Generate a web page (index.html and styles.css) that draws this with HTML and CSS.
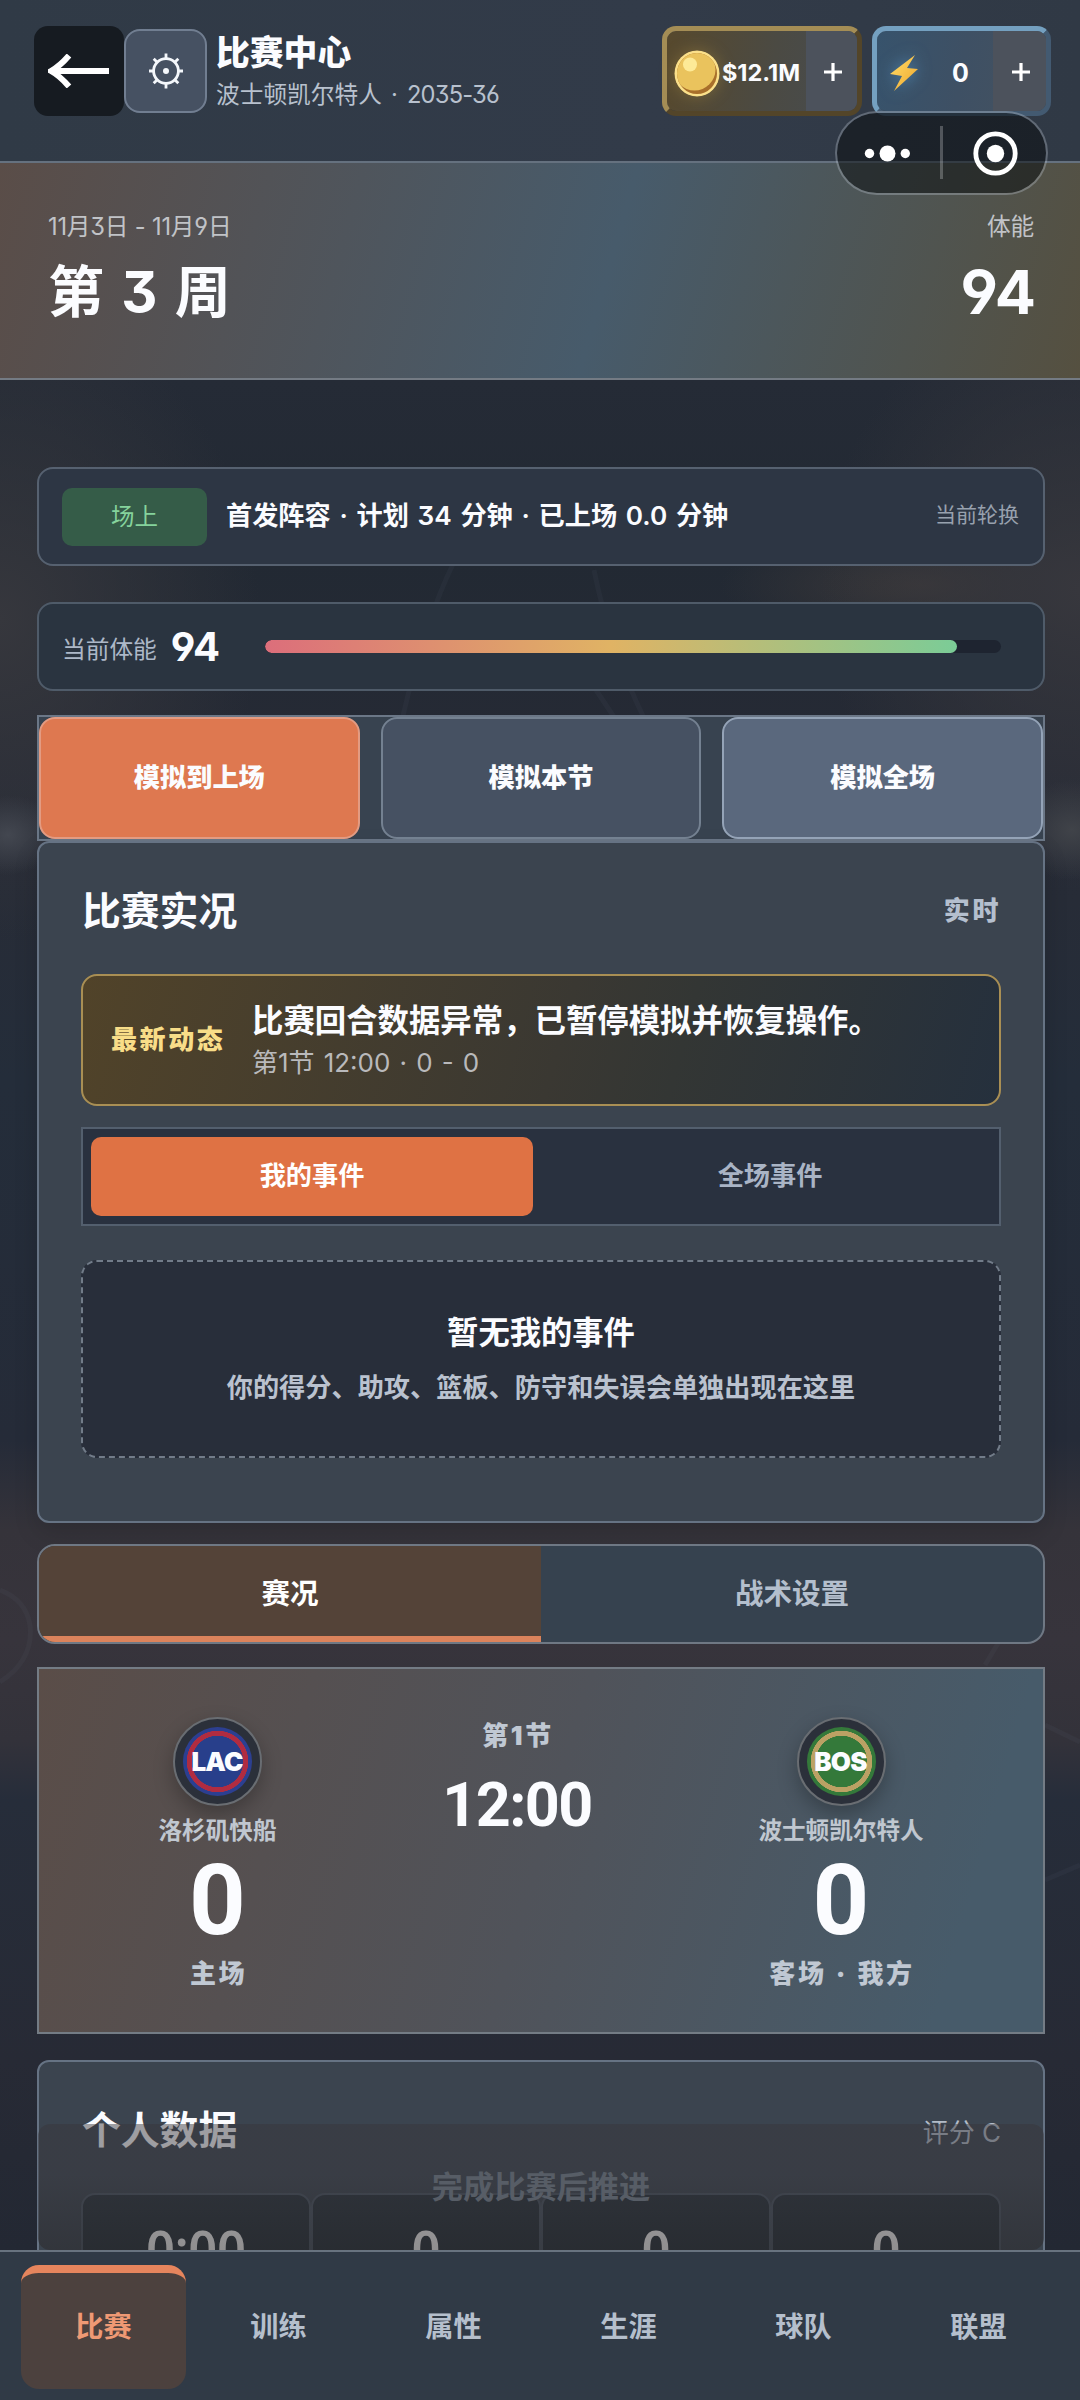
FILE: index.html
```html
<!DOCTYPE html>
<html lang="zh-CN">
<head>
<meta charset="utf-8">
<title>比赛中心</title>
<link rel="stylesheet" href="styles.css">
</head>
<body>
<div class="app">
  <svg class="court" width="1080" height="2400" viewBox="0 0 1080 2400" fill="none" aria-hidden="true">
    <path d="M455 560Q425 620 402 720M594 570Q610 650 646 722M596 690L616 720"/>
    <path d="M0 1682Q34 1660 30 1625Q26 1600 0 1590M1045 1725L1080 1742M985 1665L1000 1640M1045 1880L1080 1865"/>
  </svg>

  <header class="header">
    <button class="back" aria-label="返回">
      <svg width="62" height="34" viewBox="0 0 62 34" fill="none"><path d="M61 17H3M21 1.5Q12 12 3 17Q12 22 21 32.5" stroke="#fff" stroke-width="6"/></svg>
    </button>
    <button class="gear" aria-label="设置">
      <svg width="34" height="36" viewBox="-17 -18 34 36" fill="none" stroke="#f4f7fb" stroke-width="2.8">
        <circle r="12.4"/><circle r="3" fill="#f4f7fb" stroke="none"/>
        <path d="M0-12V-17.5M0 12V17.5M-12 0H-17M12 0H17M-8.5-8.5L-12.3-12.3M8.5-8.5L12.3-12.3M-8.5 8.5L-12.3 12.3M8.5 8.5L12.3 12.3"/>
      </svg>
    </button>
    <div class="heading">
      <h1>比赛中心</h1>
      <p>波士顿凯尔特人 · <span class="season">2035-36</span></p>
    </div>
    <div class="chip gold">
      <svg class="coin" width="46" height="47" viewBox="0 0 46 47">
        <defs><clipPath id="disc"><ellipse cx="23" cy="23.500" rx="20" ry="20.500"/></clipPath></defs>
        <ellipse cx="23" cy="23.500" rx="22.500" ry="23" fill="#fbe08a"/>
        <g clip-path="url(#disc)"><rect width="46" height="47" fill="#a86f2b"/><circle cx="20.500" cy="19.500" r="21" fill="#eac35d"/></g>
        <circle cx="16" cy="14.500" r="7" fill="#fdea97"/>
      </svg>
      <b>$12.1M</b>
      <span class="plus"><svg width="18" height="18" viewBox="0 0 18 18"><path d="M9 0V18M0 9H18" stroke="#fff" stroke-width="3.200"/></svg></span>
    </div>
    <div class="chip blue">
      <svg class="bolt" width="28" height="38" viewBox="0 0 28 38"><defs><linearGradient id="bolt" x1="0" y1="0" x2="1" y2="1"><stop stop-color="#ffdf6b"/><stop offset="1" stop-color="#efa52b"/></linearGradient></defs><path d="M25 1L0 20L12 22L4 37L28 15L17 14Z" fill="url(#bolt)"/></svg>
      <b>0</b>
      <span class="plus"><svg width="18" height="18" viewBox="0 0 18 18"><path d="M9 0V18M0 9H18" stroke="#fff" stroke-width="3.200"/></svg></span>
    </div>
  </header>

  <section class="week">
    <div><p>11月3日 - 11月9日</p><h2>第 3 周</h2></div>
    <div class="right"><p>体能</p><h2>94</h2></div>
  </section>

  <main class="content">
    <section class="status">
      <span class="tag">场上</span>
      <strong>首发阵容 · 计划 34 分钟 · 已上场 0.0 分钟</strong>
      <small>当前轮换</small>
    </section>
    <section class="energy">
      <span>当前体能</span><b>94</b>
      <div class="track"><div class="fill" style="width:94%"></div></div>
    </section>
    <div class="actions">
      <button class="act primary">模拟到上场</button>
      <button class="act">模拟本节</button>
      <button class="act light">模拟全场</button>
    </div>

    <section class="panel live">
      <div class="panel-head"><h3>比赛实况</h3><span class="badge">实时</span></div>
      <div class="notice">
        <span class="label">最新动态</span>
        <div><p class="msg">比赛回合数据异常，已暂停模拟并恢复操作。</p><p class="time">第1节 12:00 · 0 - 0</p></div>
      </div>
      <div class="seg"><button class="on">我的事件</button><button>全场事件</button></div>
      <div class="empty"><strong>暂无我的事件</strong><p>你的得分、助攻、篮板、防守和失误会单独出现在这里</p></div>
    </section>

    <div class="tabs"><button class="on">赛况</button><button>战术设置</button></div>

    <section class="score">
      <div class="team">
        <div class="logo"><div class="lac">LAC</div></div>
        <span class="name">洛杉矶快船</span><span class="pts">0</span><span class="side">主场</span>
      </div>
      <div class="clock"><span class="side">第1节</span><b>12:00</b></div>
      <div class="team">
        <div class="logo"><div class="bos">BOS</div></div>
        <span class="name">波士顿凯尔特人</span><span class="pts">0</span><span class="side">客场 · 我方</span>
      </div>
    </section>

    <section class="panel stats">
      <div class="panel-head"><h3>个人数据</h3><span class="grade">评分 C</span></div>
      <div class="cells"><div>0:00</div><div>0</div><div>0</div><div>0</div></div>
    </section>
  </main>

  <div class="advance">完成比赛后推进</div>

  <nav class="nav">
    <a class="on">比赛</a><a>训练</a><a>属性</a><a>生涯</a><a>球队</a><a>联盟</a>
  </nav>

  <div class="capsule">
    <svg width="209" height="80" viewBox="0 0 209 80" fill="#fff">
      <circle cx="32.500" cy="40.500" r="4.700"/><circle cx="50.500" cy="40.500" r="8"/><circle cx="68.300" cy="40.500" r="4.700"/>
      <rect x="103" y="13" width="3" height="53" fill="#fff" fill-opacity=".24"/>
      <circle cx="158.500" cy="40.500" r="19.700" fill="none" stroke="#fff" stroke-width="4.800"/><circle cx="158.500" cy="40.500" r="8.700"/>
    </svg>
  </div>
</div>
</body>
</html>
```
FILE: styles.css
```css
* { box-sizing: border-box; margin: 0; padding: 0; }
body { width: 1080px; height: 2400px; overflow: hidden; }
button { border: 0; background: none; font: inherit; color: inherit; }
svg { display: block; }

.app {
  position: relative;
  width: 1080px;
  height: 2400px;
  overflow: hidden;
  color: #fbfcff;
  font-family: Inter, "Noto Sans CJK SC", sans-serif;
  font-feature-settings: "cv03", "cv04", "cv09";
  background:
    radial-gradient(ellipse 50px 40px at 8px 835px, #434750, transparent),
    radial-gradient(ellipse 60px 50px at 1072px 830px, #404349, transparent),
    radial-gradient(ellipse 260px 320px at 0 620px, #36373d, transparent),
    radial-gradient(ellipse 260px 300px at 1080px 590px, #37373d, transparent),
    radial-gradient(ellipse 200px 60px at 920px 585px, #393739, transparent),
    linear-gradient(#252b36 380px, #222933 560px, #262a35 760px, #272c37 900px, #242d3a 1080px, #252b38 1440px, #35333a 1530px, #37343c 1640px, #33323a 1740px, #262d3a 1800px, #272a35 2060px, #232833 2250px);
}
.court { position: absolute; inset: 0; stroke: #8fa0b8; stroke-opacity: .05; stroke-width: 5; }

.header {
  position: relative;
  display: flex;
  align-items: flex-start;
  height: 163px;
  padding: 26px 29px 0 34px;
  background: linear-gradient(90deg, #303a46, #323b49 60%, #303945);
  border-bottom: 2px solid #65717f;
}
.back { display: flex; align-items: center; justify-content: center; width: 90px; height: 90px; border-radius: 14px; background: #161b21; }
.back svg { margin-left: -1px; }
.gear { display: flex; align-items: center; justify-content: center; width: 83px; height: 84px; margin-top: 3px; border: 2px solid #717e91; border-radius: 16px; background: #465162; }
.heading { margin: 6px 0 0 9px; width: 446px; }
.heading h1 { font-size: 33.800px; line-height: 41px; font-weight: 800; }
.heading p { font-size: 23.700px; line-height: 44px; color: #b8c1ce; white-space: nowrap; word-spacing: 2.500px; }
.season { letter-spacing: -.8px; }
.chip { display: flex; align-items: center; height: 90px; border: 5px solid; border-radius: 14px; }
.chip b { font-weight: 700; text-align: center; padding-top: 3px; }
.gold { width: 200px; margin-right: 10px; border-color: #a48d55 #534529 #534529 #a48d55; background: linear-gradient(100deg, #57492d, #4b4a43 55%, #474c50) padding-box; }
.gold b { width: 80px; margin-left: 1px; font-size: 23.500px; letter-spacing: 0; }
.gold .plus { width: 51px; }
.coin { margin: 4px 0 0 7px; border-radius: 50%; filter: drop-shadow(0 0 8px #c9a34655); }
.blue { width: 179px; border-color: #74a0c0 #435a71 #435a71 #74a0c0; background: linear-gradient(100deg, #37536c, #3e5064 50%, #45525f) padding-box; }
.blue b { width: 55px; margin-left: 15px; font-size: 25px; }
.blue .plus { width: 53px; }
.bolt { margin: 4px 0 0 13px; filter: drop-shadow(0 0 8px #5fa9dd99); }
.plus { display: flex; align-items: center; justify-content: center; height: 80px; margin-left: auto; padding-top: 2px; padding-left: 2px; border-radius: 0 9px 9px 0; background: #4c525c; }

.week {
  display: flex;
  justify-content: space-between;
  height: 217px;
  padding: 45px 46px 0 48px;
  border-bottom: 2px solid #747b84;
  background: linear-gradient(106deg, #5a4d48, #475b6b 56%, #555040);
}
.week p { font-size: 23.700px; line-height: 38px; color: #c1c3c7; letter-spacing: -.2px; }
.week h2 { margin-top: 10px; font-size: 56px; line-height: 72px; font-weight: 700; white-space: nowrap; word-spacing: 4px; }
.week .right { text-align: right; }
.week .right h2 { font-size: 61px; letter-spacing: -1px; margin-right: -1px; }

.content { position: relative; padding: 87px 35px 0 37px; }
.status { display: flex; align-items: center; height: 99px; padding: 0 24px 0 23px; border: 2px solid #566170; border-radius: 16px; background: #2d3644; }
.tag { width: 145px; height: 58px; border-radius: 10px; background: #355c48; color: #85d39c; font-size: 23.500px; line-height: 57px; text-align: center; }
.status strong { margin: -2px 0 0 19px; font-size: 26.200px; line-height: 36px; font-weight: 600; white-space: nowrap; word-spacing: 2.100px; }
.status small { margin: -3px 0 0 auto; font-size: 21px; line-height: 30px; color: #98a1ae; }
.energy { display: flex; align-items: center; height: 89px; margin-top: 36px; padding: 0 42px 0 23px; border: 2px solid #4f5b69; border-radius: 16px; background: #2a3440; }
.energy span { padding-top: 7px; font-size: 23.700px; line-height: 30px; color: #adb8c8; }
.energy b { width: 92px; margin-left: 14px; font-size: 40px; line-height: 44px; letter-spacing: -1px; }
.track { width: 736px; flex: none; margin-left: auto; height: 13px; border-radius: 7px; background: #1e2430; overflow: hidden; }
.fill { height: 100%; border-radius: 7px; background: linear-gradient(90deg, #dc6e7b, #e0b364 50%, #7bcc97); }

.actions { display: grid; grid-template-columns: repeat(3, 1fr); gap: 21px; height: 126px; margin-top: 24px; border: 2px solid #6b7787; background: #384350; }
.act { border: 2px solid #748191; border-radius: 16px; background: #465162; font-size: 26.200px; line-height: 36px; font-weight: 800; padding-bottom: 1px; }
.act.primary { background: #de7850; border-color: #e39b82; }
.act.light { background: #5a687d; border-color: #94a3b7; }

.panel { border: 2px solid #667384; border-radius: 12px; background: #3b444f; padding: 0 42px; }
.live { height: 682px; box-shadow: 0 10px 24px #0002; }
.panel-head { display: flex; align-items: center; justify-content: space-between; height: 131px; padding-top: 5px; }
.panel-head h3 { font-size: 38.800px; line-height: 50px; font-weight: 700; padding-left: 1px; }
.badge, .label, .side { font-size: 26px; line-height: 36px; font-weight: 900; letter-spacing: 2.600px; }
.badge { color: #b4bfce; }
.notice { display: flex; align-items: center; height: 132px; padding-left: 28px; border: 2px solid #a98f54; border-radius: 16px; background: linear-gradient(105deg, #514329, #3a3832 52%, #333634 65%, #25303d); }
.label { width: 141px; flex: none; color: #f8dd88; white-space: nowrap; }
.msg { font-size: 31.400px; line-height: 44px; font-weight: 600; white-space: nowrap; padding-top: 2px; }
.time { font-size: 26px; line-height: 40px; color: #b9b9bb; word-spacing: 1.800px; }
.seg { display: grid; grid-template-columns: 1fr 1fr; gap: 16px; height: 99px; margin-top: 21px; padding: 8px; border: 2px solid #535f6e; background: #29313f; }
.seg button { border-radius: 10px; font-size: 26.200px; line-height: 36px; font-weight: 600; color: #a9b4c5; padding-bottom: 2px; }
.seg .on { background: #df7244; color: #fff; font-weight: 700; }
.empty { height: 198px; margin-top: 34px; padding-top: 46px; border: 2px dashed #727c89; border-radius: 16px; background: #282e3a; text-align: center; }
.empty strong { display: block; font-size: 31.300px; line-height: 50px; font-weight: 600; }
.empty p { margin-top: 12px; font-size: 26.200px; line-height: 36px; font-weight: 700; color: #bac2cf; }

.tabs { display: grid; grid-template-columns: 1fr 1fr; height: 100px; margin-top: 21px; border: 2px solid #6f7884; border-radius: 18px; background: #36424f; overflow: hidden; }
.tabs button { font-size: 28.500px; line-height: 40px; font-weight: 600; color: #b4bfcd; }
.tabs .on { color: #fff; background: #544338; border-bottom: 6px solid #dc835b; padding-top: 6px; }

.score { display: grid; grid-template-columns: 357px 243px 1fr; height: 367px; margin-top: 23px; border: 2px solid #747c85; background: linear-gradient(106deg, #5a4d48, #50535a 50%, #475b6a 90%); }
.team { display: flex; flex-direction: column; align-items: center; padding-top: 48px; }
.logo { display: flex; align-items: center; justify-content: center; width: 89px; height: 89px; border: 2px solid #696d72; border-radius: 50%; background: #2b303a; box-shadow: 0 8px 20px #0004; }
.logo div { display: flex; align-items: center; justify-content: center; width: 69px; height: 69px; border-radius: 50%; font-size: 26px; font-weight: 900; letter-spacing: -.8px; text-indent: -1px; }
.lac { background: radial-gradient(circle, #283f8b 25.500px, #b02c41 26px 30.500px, #2c3f91 31px); }
.bos { background: radial-gradient(circle, #34793a 25.500px, #bba164 26px 30.500px, #34793a 31px); }
.name { margin-top: 8px; font-size: 23.600px; line-height: 34px; font-weight: 700; color: #c0c7d0; }
.pts { height: 104px; font: 700 99px/104px Roboto, sans-serif; }
.side { margin-top: 4px; margin-right: -2px; color: #c0c8d3; word-spacing: 1.500px; }
.clock { display: flex; flex-direction: column; align-items: center; padding: 45px 1px 0 0; }
.clock b { margin-top: 16px; font: 700 61px/70px Roboto, sans-serif; letter-spacing: -1.500px; }

.stats { height: 360px; margin-top: 26px; }
.grade { font-size: 26px; color: #b3bcc8; }
.cells { display: grid; grid-template-columns: repeat(4, 1fr); }
.cells div { height: 180px; border: 2px solid #485360; border-radius: 14px; background: #27313a; text-align: center; padding-top: 20px; font: 600 50px/66px "Noto Sans", sans-serif; color: #fff; }

.advance { position: absolute; left: 38px; top: 2124px; width: 1006px; height: 126px; border-radius: 12px; background: linear-gradient(rgba(55, 53, 58, .475) 40%, rgba(42, 40, 42, .52)); color: #575d66; font-size: 31.200px; line-height: 126px; font-weight: 700; text-align: center; }

.nav { position: absolute; left: 0; bottom: 0; width: 1080px; height: 150px; display: grid; grid-template-columns: repeat(6, 165px); gap: 10px; padding: 13px 0 11px 21px; border-top: 2px solid #68737f; background: #303a46; }
.nav a { display: flex; align-items: center; justify-content: center; font-size: 28.200px; line-height: 40px; font-weight: 600; color: #b5bfcc; border-top: 8px solid transparent; padding-bottom: 9px; border-radius: 18px; }
.nav .on { color: #ef9974; background: #4c413e; border-color: #e6855d; }

.capsule { position: absolute; left: 835px; top: 111px; width: 213px; height: 84px; border: 2px solid rgba(190, 200, 210, .34); border-radius: 42px; background: rgba(10, 13, 16, .53); background-clip: padding-box; }
```
